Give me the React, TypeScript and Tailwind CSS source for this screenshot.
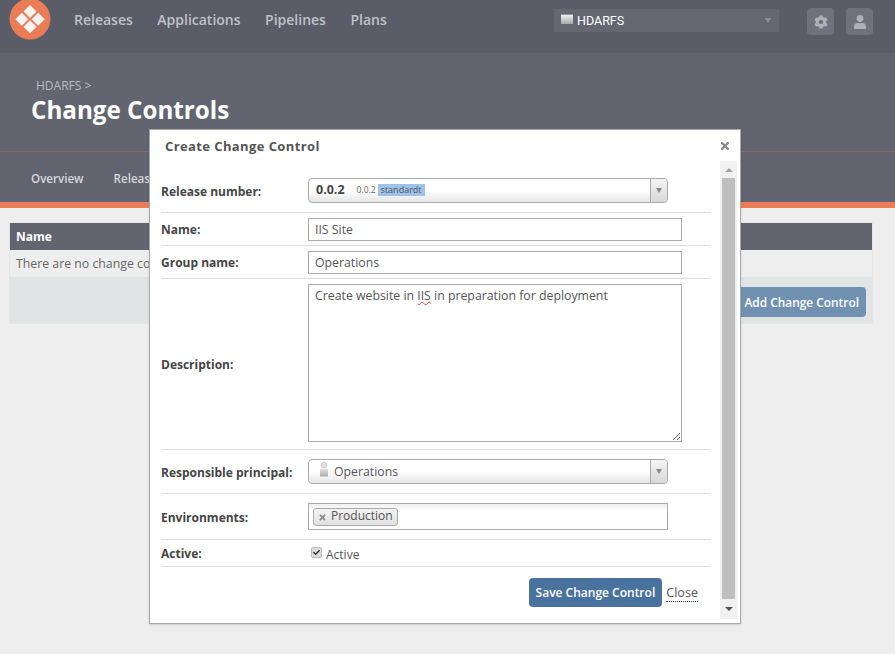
import { FaCog, FaUser, FaTimes, FaCheck } from 'react-icons/fa';

const NAV = ['Releases', 'Applications', 'Pipelines', 'Plans'];

function Logo() {
  return (
    <svg width="42" height="41" viewBox="0 0 42 41" className="block">
      <circle cx="21" cy="20" r="20.5" fill="#ea7d57" />
      <g fill="#f7f3f1">
        <path d="M21 6l6.5 6.5L21 19l-6.5-6.5z" />
        <path d="M12.8 13.7l6.5 6.5-6.5 6.5-6.5-6.5z" />
        <path d="M29.2 13.7l6.5 6.5-6.5 6.5-6.5-6.5z" />
        <path d="M21 21.2l6.5 6.5-6.5 6.5-6.5-6.5z" />
      </g>
    </svg>
  );
}

function PersonIcon() {
  return (
    <svg width="10" height="15" viewBox="0 0 10 15" className="block">
      <defs>
        <linearGradient id="person" x1="0" y1="0" x2="0" y2="1">
          <stop offset="0" stopColor="#e4e4e4" />
          <stop offset="1" stopColor="#a8a8a8" />
        </linearGradient>
      </defs>
      <circle cx="5" cy="3.2" r="2.9" fill="#e2e2e2" stroke="#bbb" strokeWidth="0.6" />
      <path d="M1 8q0-1.5 1.5-1.5h5q1.5 0 1.5 1.5v6.5H1z" fill="url(#person)" />
    </svg>
  );
}

function SelectBox({ children }: { children: React.ReactNode }) {
  return (
    <div className="w-[360px] h-[25px] flex rounded-[4px] border border-[#aaa] bg-gradient-to-b from-white from-50% to-[#e6e6e6]">
      <div className="flex-1 flex items-center pl-[7px] min-w-0">{children}</div>
      <div className="w-[17px] border-l border-[#aaa] bg-gradient-to-b from-[#f4f4f4] to-[#d8d8d8] rounded-r-[4px] flex items-center justify-center">
        <div className="w-0 h-0 border-x-[3px] border-x-transparent border-t-[5px] border-t-[#888]" />
      </div>
    </div>
  );
}

function Row({ label, height, children }: { label: string; height: string; children: React.ReactNode }) {
  return (
    <div className={`grid grid-cols-[147px_1fr] items-center border-b border-[#ddd] ${height}`}>
      <div className="pt-[2px] font-bold text-[12px] text-[#454545]">{label}</div>
      <div>{children}</div>
    </div>
  );
}

function TextBox({ value }: { value: string }) {
  return (
    <div className="w-[374px] h-[23px] border border-[#aaa] bg-white px-[6px] text-[12.3px] leading-[21px] text-[#555]">{value}</div>
  );
}

export default function App() {
  return (
    <div className="relative w-[895px] h-[654px] overflow-hidden bg-[#eee] font-['Open_Sans',sans-serif] text-[#555]">
      {/* Top bar */}
      <div className="h-[53px] bg-[#5a5c68] flex items-start pl-[9px] pr-[22px]">
        <div className="-mt-[1px]">
          <Logo />
        </div>
        <nav className="flex gap-[24.5px] ml-[23px] mt-[9px] text-[14px] font-semibold text-[#bfc1c6]">
          {NAV.map((item) => (
            <span key={item}>{item}</span>
          ))}
        </nav>
        <div className="ml-auto mt-[9px] w-[225px] h-[23px] bg-[#646772] flex items-center pl-[7px] pr-[8px] relative">
          <div className="w-[12px] h-[10px] -mt-[4px] bg-gradient-to-b from-[#f0f0f0] to-[#a8a8a8] border-t border-[#999]" />
          <span className="ml-[4px] mt-[1px] text-[12.5px] text-white font-['Roboto',sans-serif]">HDARFS</span>
          <div className="ml-auto w-0 h-0 border-x-[3px] border-x-transparent border-t-[5px] border-t-[#8b8d96]" />
        </div>
        <div className="ml-[28px] mt-[8px] w-[27px] h-[27px] rounded-[4px] bg-[#6f717c] flex items-center justify-center text-[#aeb0b5]">
          <FaCog size={14} />
        </div>
        <div className="ml-[12px] mt-[8px] w-[27px] h-[27px] rounded-[4px] bg-[#6f717c] flex items-center justify-center text-[#aeb0b5]">
          <FaUser size={14} />
        </div>
      </div>

      {/* Page header */}
      <div className="h-[99px] bg-[#626570] border-b border-[#8a6a68] pl-[31px]">
        <div className="pt-[25px] pl-[5px] text-[12px] leading-[16px] text-[#b7b9be]">HDARFS &gt;</div>
        <h1 className="text-[24.2px] leading-[32px] font-bold text-white">Change Controls</h1>
      </div>

      {/* Sub navigation */}
      <div className="h-[56px] bg-[#626570] border-b-[6px] border-[#ea7d57] flex gap-[30px] pl-[31px] pt-[18px] text-[11.6px] font-semibold text-[#d4d6d9]">
        <span>Overview</span>
        <span>Releases</span>
      </div>

      {/* Table behind dialog */}
      <div className="mx-[9px] mt-[14px] w-[864px] border border-[#e6e6e6]">
        <div className="h-[27px] bg-[#626570] pl-[6px] text-[12px] leading-[27px] font-bold text-white">Name</div>
        <div className="h-[27px] bg-[#eee] pl-[6px] text-[12.3px] leading-[27px] text-[#666]">There are no change co</div>
        <div className="h-[46px] bg-[#e1e4e4] flex items-center justify-end pt-[4px] pr-[6px]">
          <div className="h-[30px] px-[7px] rounded-[4px] bg-[#7191b2] text-[11.9px] leading-[30px] font-semibold text-white">Add Change Control</div>
        </div>
      </div>

      {/* Dialog */}
      <div className="absolute left-[149px] top-[129px] w-[592px] h-[495px] bg-white border border-[#aaa] shadow-sm">
        <div className="h-[39px] pl-[15px] pr-[9px] flex items-start justify-between">
          <h2 className="mt-[7px] text-[13px] leading-[18px] font-bold tracking-[0.4px] text-[#555]">Create Change Control</h2>
          <FaTimes size={12} className="mt-[10px] text-[#888]" />
        </div>
        <div className="flex">
          {/* Form */}
          <div className="w-[550px] ml-[11px]">
            <Row label="Release number:" height="h-[44px]">
              <div className="-mt-[1px]">
                <SelectBox>
                  <span className="font-bold text-[12.5px] text-[#444]">0.0.2</span>
                  <span className="ml-[12px] text-[8.5px] text-[#666]">0.0.2</span>
                  <span className="ml-[2px] px-[3px] text-[9px] leading-[12px] bg-[#9fc3e8] text-[#555]">standardt</span>
                </SelectBox>
              </div>
            </Row>
            <Row label="Name:" height="h-[33px]">
              <TextBox value="IIS Site" />
            </Row>
            <Row label="Group name:" height="h-[33px]">
              <TextBox value="Operations" />
            </Row>
            <Row label="Description:" height="h-[171px]">
              <div className="relative -mt-[2px] w-[374px] h-[158px] border border-[#aaa] bg-white px-[6px] pt-[2px] text-[12.3px] leading-[17px] text-[#555]">
                Create website in <span className="underline decoration-wavy decoration-[#e04040] decoration-1">IIS</span> in preparation for deployment
                <svg width="10" height="10" viewBox="0 0 10 10" className="absolute right-0 bottom-0">
                  <path d="M2 9l7-7M6 9l3-3" stroke="#666" strokeWidth="1" />
                </svg>
              </div>
            </Row>
            <Row label="Responsible principal:" height="h-[44px]">
              <SelectBox>
                <div className="ml-[3px] -mt-[5px]">
                  <PersonIcon />
                </div>
                <span className="ml-[5px] mt-[2px] text-[12.3px] text-[#555]">Operations</span>
              </SelectBox>
            </Row>
            <Row label="Environments:" height="h-[46px]">
              <div className="w-[360px] h-[27px] border border-[#aaa] bg-gradient-to-b from-[#f0f0f0] from-0% to-white to-30% flex items-center pl-[4px]">
                <div className="h-[18px] rounded-[3px] border border-[#aaa] bg-gradient-to-b from-[#f4f4f4] to-[#e0e0e0] flex items-center pl-[4px] pr-[4px] text-[12px] text-[#555]">
                  <FaTimes size={9} className="text-[#888] mt-[1px]" />
                  <span className="ml-[4px] -mt-[1px]">Production</span>
                </div>
              </div>
            </Row>
            <Row label="Active:" height="h-[27px]">
              <div className="flex items-center pl-[3px] text-[12px] text-[#555]">
                <div className="w-[11px] h-[11px] rounded-[2px] border border-[#bbb] bg-[#ddd] flex items-center justify-center -mt-[2px]">
                  <FaCheck size={7} className="text-[#333]" />
                </div>
                <span className="ml-[4px] mt-[3px]">Active</span>
              </div>
            </Row>
            <div className="flex items-center justify-end pr-[13px] mt-[11px]">
              <div className="h-[29px] px-[7px] rounded-[4px] bg-[#4a729f] text-[12px] leading-[29px] font-semibold text-white">Save Change Control</div>
              <span className="ml-[4px] mt-[2px] text-[12.6px] leading-[16px] text-[#555] border-b border-dotted border-[#333]">Close</span>
            </div>
          </div>

          {/* Scrollbar */}
          <div className="ml-[9px] -mt-[8px] w-[17px] h-[458px] bg-[#f1f1f1] flex flex-col items-center">
            <div className="h-[17px] flex items-center justify-center">
              <div className="w-0 h-0 border-x-[4px] border-x-transparent border-b-[4px] border-b-[#a3a3a3]" />
            </div>
            <div className="w-[13px] flex-1 bg-[#bfbfbf]" />
            <div className="h-[20px] flex items-center justify-center">
              <div className="w-0 h-0 border-x-[4px] border-x-transparent border-t-[4px] border-t-[#505050]" />
            </div>
          </div>
        </div>
      </div>
    </div>
  );
}
